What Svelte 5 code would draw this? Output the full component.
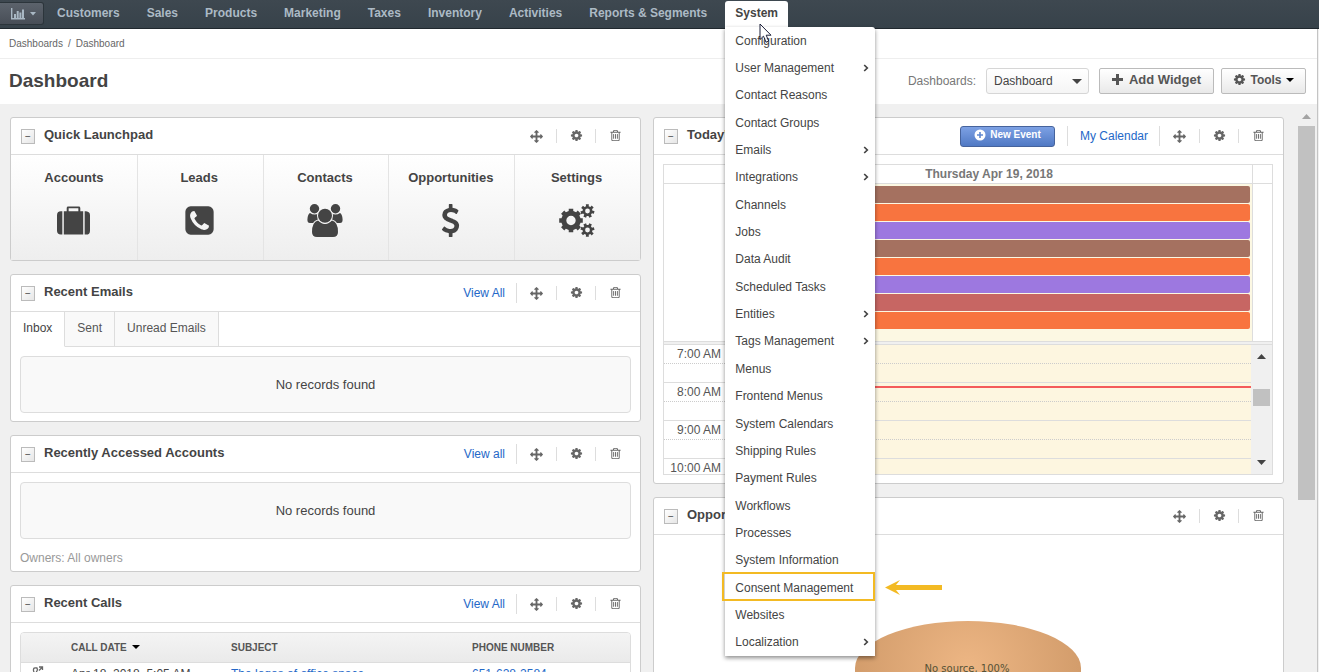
<script>
  const navItems = ['Customers', 'Sales', 'Products', 'Marketing', 'Taxes', 'Inventory', 'Activities', 'Reports & Segments'];

  const menuItems = [
    { label: 'Configuration' },
    { label: 'User Management', sub: true },
    { label: 'Contact Reasons' },
    { label: 'Contact Groups' },
    { label: 'Emails', sub: true },
    { label: 'Integrations', sub: true },
    { label: 'Channels' },
    { label: 'Jobs' },
    { label: 'Data Audit' },
    { label: 'Scheduled Tasks' },
    { label: 'Entities', sub: true },
    { label: 'Tags Management', sub: true },
    { label: 'Menus' },
    { label: 'Frontend Menus' },
    { label: 'System Calendars' },
    { label: 'Shipping Rules' },
    { label: 'Payment Rules' },
    { label: 'Workflows' },
    { label: 'Processes' },
    { label: 'System Information' },
    { label: 'Consent Management', marked: true },
    { label: 'Websites' },
    { label: 'Localization', sub: true }
  ];

  const launchers = ['Accounts', 'Leads', 'Contacts', 'Opportunities', 'Settings'];
  const eventColors = ['#a57160', '#f8743f', '#9d78e0', '#a57160', '#f8743f', '#9d78e0', '#c76663', '#f8743f'];
  const hours = ['7:00 AM', '8:00 AM', '9:00 AM', '10:00 AM'];

  const icons = {
    move: 'M1792 896q0 26-19 45l-256 256q-19 19-45 19t-45-19-19-45v-128h-384v384h128q26 0 45 19t19 45-19 45l-256 256q-19 19-45 19t-45-19l-256-256q-19-19-19-45t19-45 45-19h128v-384h-384v128q0 26-19 45t-45 19-45-19l-256-256q-19-19-19-45t19-45l256-256q19-19 45-19t45 19 19 45v128h384v-384h-128q-26 0-45-19t-19-45 19-45l256-256q19-19 45-19t45 19l256 256q19 19 19 45t-19 45-45 19h-128v384h384v-128q0-26 19-45t45-19 45 19l256 256q19 19 19 45z',
    cog: 'M1152 896q0-106-75-181t-181-75-181 75-75 181 75 181 181 75 181-75 75-181zm512-109v222q0 12-8 23t-20 13l-185 28q-19 54-39 91 35 50 107 138 10 12 10 25t-9 23q-27 37-99 108t-94 71q-12 0-26-9l-138-108q-44 23-91 38-16 136-29 186-7 28-36 28h-222q-14 0-24.5-8.5t-11.5-21.5l-28-184q-49-16-90-37l-141 107q-10 9-25 9-14 0-25-11-126-114-165-168-7-10-7-23 0-12 8-23 15-21 51-66.5t54-70.5q-27-50-41-99l-183-27q-13-2-21-12.5t-8-23.5v-222q0-12 8-23t19-13l186-28q14-46 39-92-40-57-107-138-10-12-10-24 0-10 9-23 26-36 98.5-107.5t94.5-71.5q13 0 26 10l138 107q44-23 91-38 16-136 29-186 7-28 36-28h222q14 0 24.5 8.5t11.5 21.5l28 184q49 16 90 37l142-107q9-9 24-9 13 0 25 10 129 119 165 170 7 8 7 22 0 12-8 23-15 21-51 66.5t-54 70.5q26 50 41 98l183 28q13 2 21 12.5t8 23.5z',
    trash: 'M704 736v576q0 14-9 23t-23 9h-64q-14 0-23-9t-9-23v-576q0-14 9-23t23-9h64q14 0 23 9t9 23zm256 0v576q0 14-9 23t-23 9h-64q-14 0-23-9t-9-23v-576q0-14 9-23t23-9h64q14 0 23 9t9 23zm256 0v576q0 14-9 23t-23 9h-64q-14 0-23-9t-9-23v-576q0-14 9-23t23-9h64q14 0 23 9t9 23zm128 724v-948h-896v948q0 22 7 40.5t14.5 27 10.5 8.5h832q3 0 10.5-8.5t14.5-27 7-40.5zm-672-1076h448l-48-117q-7-9-17-11h-317q-10 2-17 11zm928 32v64q0 14-9 23t-23 9h-96v948q0 83-47 143.5t-113 60.5h-832q-66 0-113-58.5t-47-141.5v-952h-96q-14 0-23-9t-9-23v-64q0-14 9-23t23-9h309l70-167q15-37 54-63t79-26h320q40 0 79 26t54 63l70 167h309q14 0 23 9t9 23z',
    Leads: 'M1408 1193q0-11-2-16t-18-16.5-40.5-25-47.5-26.5-45.5-25-28.5-15q-5-3-19-13t-25-15-21-5q-15 0-36.5 20.5t-39.5 45-38.5 45-33.5 20.5q-7 0-16.5-3.5t-15.5-6.5-17-9.5-14-8.5q-99-55-170-126.500t-127-170.5q-2-3-8.5-14t-9.5-17-6.5-15.5-3.500-16.5q0-13 20.500-33.500t45-38.500 45-39.500 20.500-36.500q0-10-5-21t-15-25-13-19q-3-6-15-28.500t-25-45.500-26.500-47.500-25-40.500-16.500-18-16-2q-48 0-101 22-46 21-80 94.500t-34 130.500q0 16 2.500 34t5 30.500 9 33 10 29.500 12.500 33 11 30q60 164 216.500 320.500t320.500 216.500q6 2 30 11t33 12.500 29.500 10 33 9 30.500 5 34 2.500q57 0 130.500-34t94.500-80q22-53 22-101zm256-777v960q0 119-84.500 203.500t-203.500 84.500h-960q-119 0-203.500-84.500t-84.500-203.500v-960q0-119 84.500-203.500t203.500-84.500h960q119 0 203.500 84.500t84.500 203.500z',
    Opportunities: 'M1362 1185q0 153-99.5 263.5t-258.5 136.5v175q0 14-9 23t-23 9h-135q-13 0-22.5-9.5t-9.5-22.5v-175q-66-9-127.5-31t-101.500-44.500-74-48-46.500-37.500-17.500-18q-17-21-2-41l103-135q7-10 23-12 15-2 24 9l2 2q113 99 243 125 37 8 74 8 81 0 142.500-43t61.500-122q0-28-15-53t-33.500-42-58.500-37.500-66-32-80-32.500q-39-16-61.500-25t-61.500-26.500-62.500-31-56.500-35.500-53.500-42.500-43.500-49-35.500-58-21-66.500-8.500-78q0-138 98-242t255-134v-180q0-13 9.500-22.500t22.500-9.500h135q14 0 23 9t9 23v176q57 6 110.500 23t87 33.500 63.500 37.500 39 29 15 14q17 18 5 38l-81 146q-8 15-23 16-14 3-27-7-3-3-14.500-12t-39-26.500-58.500-32-74.500-26-85.500-11.500q-95 0-155 43t-60 111q0 26 8.500 48t29.500 41.500 39.500 33 56 31 60.500 27 70 27.500q53 20 81 31.500t76 35 75.500 42.500 62 50 53 63.500 31.500 76.500 13 94z'
  };

  // Outline of a cog wheel with square teeth and a round hole.
  function gear(cx, cy, outer, inner, hole, teeth, turn = 0) {
    const step = (Math.PI * 2) / teeth;
    const points = [];
    for (let i = 0; i < teeth; i++) {
      const a = i * step + turn;
      for (const [offset, r] of [[-0.3, inner], [-0.24, outer], [0.24, outer], [0.3, inner]]) {
        const t = a + offset * step;
        points.push(`${(cx + Math.cos(t) * r).toFixed(2)} ${(cy + Math.sin(t) * r).toFixed(2)}`);
      }
    }
    return `M${points.join('L')}ZM${cx - hole} ${cy}a${hole} ${hole} 0 1 0 ${hole * 2} 0a${hole} ${hole} 0 1 0 ${-hole * 2} 0Z`;
  }
</script>

{#snippet glyph(name, cls)}
  <svg class={cls} viewBox="0 0 1792 1792" aria-hidden="true"><path d={icons[name]} /></svg>
{/snippet}

{#snippet widgetHead(title, link, newEvent)}
  <header class="widget-head">
    <button class="collapse" aria-label="Collapse {title}">−</button>
    <h2>{title}</h2>
    <div class="actions">
      {#if newEvent}
        <button class="new-event">
          <svg viewBox="0 0 12 12" aria-hidden="true"><circle cx="6" cy="6" r="5.500" fill="#fff" /><path d="M6 3v6M3 6h6" stroke="#6088cf" stroke-width="1.600" /></svg>
          New Event
        </button>
        <span class="bar"></span>
      {/if}
      {#if link}
        <a class="link" href="#all">{link}</a>
        <span class="bar"></span>
      {/if}
      <button class="tool" aria-label="Move">{@render glyph('move', 'small-icon')}</button>
      <button class="tool split" aria-label="Configure">{@render glyph('cog', 'small-icon')}</button>
      <button class="tool split" aria-label="Delete">{@render glyph('trash', 'small-icon')}</button>
    </div>
  </header>
{/snippet}

<div class="app">
  <nav class="topbar">
    <button class="dash-button" aria-label="Dashboards menu">
      <svg width="15" height="12" viewBox="0 0 15 12" aria-hidden="true"><path d="M.7 0v10.700H14" fill="none" stroke="#a9b8c4" stroke-width="1.400" /><path d="M3 6h2v4H3zM5.700 3h2v7h-2zM8.400 4.500h2V10h-2zM11 1.500h2V10h-2z" fill="#a9b8c4" /></svg>
      <svg width="6" height="4" viewBox="0 0 6 4" aria-hidden="true"><path d="M0 0h6L3 3.500z" fill="#a9b8c4" /></svg>
    </button>
    <ul class="nav-list">
      {#each navItems as item}
        <li><a href="#nav">{item}</a></li>
      {/each}
      <li class="open">
        <a href="#system">System</a>
        <ul class="menu">
          {#each menuItems as item}
            <li class:marked={item.marked}>
              <a href="#item">{item.label}</a>
              {#if item.sub}
                <svg width="6" height="8" viewBox="0 0 6 8" aria-hidden="true"><path d="M1.200 1L4.300 4 1.200 7" fill="none" stroke="#444" stroke-width="1.700" /></svg>
              {/if}
              {#if item.marked}
                <svg class="arrow" width="57" height="15" viewBox="0 0 57 15" aria-hidden="true"><path d="M0 7.500L15 0l-4 5h46v5H11l4 5z" fill="#f3ba23" /></svg>
              {/if}
            </li>
          {/each}
        </ul>
        <svg class="pointer" width="13" height="21" viewBox="0 0 13 21" aria-hidden="true"><path d="M1 1v15.500l3.500-3.300 2.500 6 2.700-1.100L7.200 12.200H12z" fill="#fff" fill-opacity=".8" stroke="#1b1f38" /></svg>
      </li>
    </ul>
  </nav>

  <div class="page">
    <div class="crumbs"><a href="#dashboards">Dashboards</a><span>/</span><a href="#dashboard">Dashboard</a></div>
    <div class="title-row">
      <h1>Dashboard</h1>
      <div class="controls">
        <label for="board">Dashboards:</label>
        <span class="select-wrap">
          <select id="board"><option>Dashboard</option></select>
          <svg width="10" height="5" viewBox="0 0 10 5" aria-hidden="true"><path d="M0 0h10L5 5z" fill="#444" /></svg>
        </span>
        <button class="btn add">
          <svg width="11" height="11" viewBox="0 0 11 11" aria-hidden="true"><path d="M5.500 0v11M0 5.500h11" stroke="#555" stroke-width="3" /></svg>
          Add Widget
        </button>
        <button class="btn tools">
          {@render glyph('cog', 'small-icon')}
          Tools
          <svg width="8" height="4" viewBox="0 0 8 4" aria-hidden="true"><path d="M0 0h8L4 4z" fill="#000" /></svg>
        </button>
      </div>
    </div>

    <main>
      <div class="columns">
        <div class="column">
          <section class="widget">
            {@render widgetHead('Quick Launchpad')}
            <div class="launchpad">
              {#each launchers as name}
                <a href="#open">
                  <span>{name}</span>
                  {#if name === 'Accounts'}
                    <svg class="big-icon" viewBox="0 0 34 33" aria-hidden="true"><path fill-rule="evenodd" d="M10 7V3.500Q10 2 11.500 2h11Q24 2 24 3.500V7h3v24H7V7zM12 4v3h10V4zM5.500 7v24H4q-4-.5-4-4V11q0-4 4-4zM28.500 7H30q4 .5 4 4v16q0 4-4 4h-1.500z" /></svg>
                  {:else if name === 'Contacts'}
                    <svg class="big-icon wide" viewBox="0 0 36 33" aria-hidden="true">
                      <circle cx="7.500" cy="4.700" r="4.700" /><circle cx="28.500" cy="4.700" r="4.700" />
                      <path d="M3 9Q7.500 12 12 9L14 19H3Q.3 19 .4 15.500 .7 10 3 9zM33 9Q28.500 12 24 9L22 19h11q2.700 0 2.600-3.500Q35.300 10 33 9z" />
                      <path class="cut" d="M11 16.500Q15 20 18 20t7-3.500q6 1.500 6 11.500 0 5-5 5h-16q-5 0-5-5 0-10 6-11.500z" />
                      <circle class="cut" cx="18" cy="11.700" r="7" />
                    </svg>
                  {:else if name === 'Settings'}
                    <svg class="big-icon wide" viewBox="0 0 36 33" aria-hidden="true"><path fill-rule="evenodd" d={gear(12, 16.500, 12, 9.800, 4.700, 8) + gear(28.500, 7, 7, 5, 2.400, 7, 0.200) + gear(28.500, 26, 7, 5, 2.400, 7, -0.200)} /></svg>
                  {:else}
                    {@render glyph(name, 'big-icon')}
                  {/if}
                </a>
              {/each}
            </div>
          </section>

          <section class="widget">
            {@render widgetHead('Recent Emails', 'View All')}
            <div class="tabs">
              <button class="active">Inbox</button>
              <button>Sent</button>
              <button>Unread Emails</button>
            </div>
            <div class="body"><p class="empty">No records found</p></div>
          </section>

          <section class="widget">
            {@render widgetHead('Recently Accessed Accounts', 'View all')}
            <div class="body"><p class="empty">No records found</p></div>
            <p class="owners">Owners: All owners</p>
          </section>

          <section class="widget">
            {@render widgetHead('Recent Calls', 'View All')}
            <div class="body">
              <div class="table-frame">
                <table>
                  <thead>
                    <tr>
                      <th class="c-icon"></th>
                      <th class="c-date">CALL DATE <svg width="8" height="4" viewBox="0 0 8 4" aria-hidden="true"><path d="M0 0h8L4 4z" fill="#000" /></svg></th>
                      <th class="c-subject">SUBJECT</th>
                      <th>PHONE NUMBER</th>
                    </tr>
                  </thead>
                  <tbody>
                    <tr>
                      <td class="c-icon"><svg width="12" height="12" viewBox="0 0 12 12" aria-hidden="true"><path d="M5 2Q1 1 1.500 4.500T8 11l2-2-2-2-1.500 1Q5 7 4.500 5.500L5.500 4zM7 1h3.500v3M10 1.500L7 4.500" fill="none" stroke="#666" stroke-width="1.300" /></svg></td>
                      <td>Apr 18, 2018, 5:05 AM</td>
                      <td><a href="#call">The logos of office space</a></td>
                      <td><a href="#phone">651-628-2584</a></td>
                    </tr>
                  </tbody>
                </table>
              </div>
            </div>
          </section>
        </div>

        <div class="column">
          <section class="widget">
            {@render widgetHead("Today's Calendar", 'My Calendar', true)}
            <div class="body">
              <div class="calendar">
                <div class="cal-row cal-head"><div></div><div>Thursday Apr 19, 2018</div><div></div></div>
                <div class="cal-row all-day">
                  <div></div>
                  <div class="events">
                    {#each eventColors as color}
                      <i style="background: {color}"></i>
                    {/each}
                  </div>
                  <div></div>
                </div>
                <div class="divider"></div>
                <div class="slots">
                  <div class="slot-rows">
                    {#each hours as hour}
                      <div class="hour"><span>{hour}</span><div></div></div>
                    {/each}
                    <div class="now"></div>
                  </div>
                  <div class="cal-scroll">
                    <svg width="9" height="5" viewBox="0 0 9 5" aria-hidden="true"><path d="M0 5h9L4.500 0z" /></svg>
                    <i></i>
                    <svg class="down" width="9" height="5" viewBox="0 0 9 5" aria-hidden="true"><path d="M0 0h9L4.500 5z" /></svg>
                  </div>
                </div>
              </div>
            </div>
          </section>

          <section class="widget">
            {@render widgetHead('Opportunities By Lead Source')}
            <div class="chart">
              <svg width="226" height="120" viewBox="0 0 226 120" role="img" aria-label="Opportunities by source">
                <defs>
                  <radialGradient id="pie" cx="113" cy="48" r="125" gradientUnits="userSpaceOnUse">
                    <stop offset="0" stop-color="#edb684" />
                    <stop offset="1" stop-color="#d09a69" />
                  </radialGradient>
                </defs>
                <path d="M0 48a113 47 0 0 1 226 0v30a113 47 0 0 1-226 0z" fill="url(#pie)" />
                <text x="112" y="52" text-anchor="middle">No source, 100%</text>
              </svg>
            </div>
          </section>
        </div>
      </div>

      <div class="page-scroll">
        <svg width="9" height="5" viewBox="0 0 9 5" aria-hidden="true"><path d="M0 5h9L4.500 0z" fill="#a3a3a3" /></svg>
        <i></i>
      </div>
    </main>
  </div>
</div>

<style>
  :global(body) {
    margin: 0;
    overflow: hidden;
  }

  .app, .app :global(*) { box-sizing: border-box; }

  .app {
    display: flex;
    flex-direction: column;
    height: 100vh;
    background: #f0f0f0;
    color: #444;
    font: 12px/20px "Liberation Sans", Arial, sans-serif;
  }

  a { color: inherit; text-decoration: none; }
  h1, h2, p, ul { margin: 0; padding: 0; }
  ul { list-style: none; }
  button, select { font: inherit; color: inherit; }

  .topbar {
    display: flex;
    height: 29px;
    flex: none;
    background: linear-gradient(#3e4850, #37424a);
    border-bottom: 1px solid #20282e;
  }
  .dash-button {
    display: flex;
    align-items: center;
    gap: 4px;
    width: 44px;
    height: 23px;
    margin: 2px 3px 0 0;
    padding: 0 0 0 11px;
    border: 1px solid #2c353b;
    border-left: 0;
    border-radius: 0 3px 3px 0;
    background: linear-gradient(#5c636c, #484e57);
  }
  .nav-list { display: flex; gap: 7px; padding-top: 1px; }
  .nav-list > li { position: relative; height: 26px; }
  .nav-list > li > a {
    display: block;
    padding: 0 10px;
    font-weight: bold;
    line-height: 24px;
    color: #acbac5;
    white-space: nowrap;
  }
  .nav-list > .open { margin-left: 1px; background: #fff; border-radius: 3px 3px 0 0; }
  .nav-list > .open > a { color: #444; }

  .menu {
    position: absolute;
    z-index: 5;
    top: 26px;
    left: 0;
    display: grid;
    grid-auto-rows: 1fr;
    width: 150px;
    min-height: 629px;
    background: #fff;
    border-radius: 0 3px 0 0;
    box-shadow: 0 2px 4px rgba(0, 0, 0, .45);
  }
  .menu li {
    position: relative;
    display: flex;
    align-items: center;
    justify-content: space-between;
    padding: 0 6px 0 10px;
  }
  .menu a { white-space: nowrap; }
  .menu .marked::before {
    content: "";
    position: absolute;
    inset: -2px 0 0 -3px;
    border: 2px solid #f3ba23;
  }
  .arrow { position: absolute; left: 160px; top: 6px; }
  .pointer { position: absolute; z-index: 6; left: 34px; top: 22px; }

  .page {
    display: flex;
    flex-direction: column;
    flex: 1;
    min-height: 0;
    margin-right: 1px;
    border-right: 1px solid #c4c4c4;
  }
  .crumbs {
    display: flex;
    gap: 5px;
    height: 30px;
    padding: 0 9px;
    border-bottom: 1px solid #eee;
    background: #fff;
    font-size: 10px;
    line-height: 29px;
    color: #666;
  }
  .title-row {
    display: flex;
    align-items: center;
    justify-content: space-between;
    height: 45px;
    padding: 0 11px 2px 9px;
    background: #fff;
  }
  h1 { font-size: 19px; line-height: 24px; }
  .controls { display: flex; align-items: center; }
  .controls label { margin-right: 10px; color: #777; }
  .select-wrap {
    position: relative;
    width: 103px;
    margin-right: 10px;
  }
  .select-wrap svg { position: absolute; right: 7px; top: 11px; pointer-events: none; }
  select {
    display: block;
    width: 100%;
    height: 26px;
    padding: 0 7px;
    appearance: none;
    border: 1px solid #d6d6d6;
    border-radius: 3px;
    background: linear-gradient(#fff, #f5f5f5);
  }
  .btn {
    display: flex;
    align-items: center;
    justify-content: center;
    height: 26px;
    padding: 0 10px 2px;
    border: 1px solid #bbb;
    border-radius: 2px;
    background: linear-gradient(#fff, #e9e9e9);
    font-weight: bold;
    color: #555;
    fill: #555;
  }
  .add { gap: 6px; width: 115px; margin-right: 7px; font-size: 13px; }
  .tools { gap: 4px; width: 85px; }

  main { display: flex; flex: 1; min-height: 0; overflow: hidden; }
  .columns {
    display: grid;
    grid-template-columns: 1fr 1fr;
    gap: 12px;
    flex: 1;
    padding: 13px 14px 0 10px;
  }
  .column { display: flex; flex-direction: column; gap: 13px; min-width: 0; }
  .widget {
    border: 1px solid #ccc;
    border-radius: 3px;
    background: #fff;
  }
  .widget-head {
    display: flex;
    height: 37px;
    padding: 0 6px 0 10px;
    border-bottom: 1px solid #ddd;
  }
  .collapse {
    width: 14px;
    height: 15px;
    margin: 11px 9px 0 0;
    padding: 0;
    border: 1px solid #bbb;
    background: linear-gradient(135deg, #fff, #e6e6e6);
    font-size: 10px;
    line-height: 11px;
  }
  h2 { flex: 1; font-size: 13px; line-height: 34px; white-space: nowrap; }
  .actions { display: flex; align-items: center; }
  .tool {
    display: flex;
    justify-content: center;
    width: 39px;
    padding: 0;
    border: 0;
    background: none;
    fill: #666;
  }
  .split { height: 14px; border-left: 1px solid #ddd; }
  .small-icon { width: 13px; height: 13px; }
  .bar { width: 1px; height: 20px; background: #ddd; }
  .link { margin: 0 11px 0 12px; color: #2468c8; }
  .new-event {
    display: flex;
    align-items: center;
    justify-content: center;
    gap: 4px;
    width: 95px;
    height: 21px;
    margin-right: 12px;
    padding: 0 0 2px;
    border: 1px solid #46639c;
    border-radius: 3px;
    background: linear-gradient(#7da1e4, #5079c4);
    color: #fff;
    font-size: 10px;
    font-weight: bold;
  }
  .new-event svg { width: 12px; height: 12px; }
  .body { padding: 9px 9px 8px; }
  .empty {
    border: 1px solid #ddd;
    border-radius: 4px;
    background: #f9f9f9;
    font-size: 13px;
    line-height: 55px;
    text-align: center;
  }
  .owners { padding: 1px 9px 3px; color: #999; }

  .launchpad { display: grid; grid-template-columns: repeat(5, 1fr); background: linear-gradient(#fff, #eee); }
  .launchpad a {
    display: flex;
    flex-direction: column;
    align-items: center;
    gap: 16px;
    padding: 13px 0 23px;
    font-size: 13px;
    font-weight: bold;
  }
  .launchpad a + a { border-left: 1px solid #e4e4e4; }
  .launchpad a + a { padding-right: 2px; }
  .big-icon { width: 33px; height: 33px; fill: #444; }
  .wide { width: 36px; }
  .cut { stroke: #f6f6f6; stroke-width: 2px; paint-order: stroke; }

  .tabs { display: flex; height: 35px; box-shadow: inset 0 -1px #ddd; }
  .tabs button {
    padding: 0 12px 2px;
    border: 0;
    border-right: 1px solid #ddd;
    border-bottom: 1px solid #ddd;
    background: #f9f9f9;
    color: #555;
  }
  .tabs .active { background: #fff; border-bottom-color: #fff; color: #444; }

  .table-frame { border: 1px solid #ddd; border-radius: 4px; overflow: hidden; }
  table { width: 100%; table-layout: fixed; border-collapse: collapse; }
  th {
    height: 29px;
    padding: 2px 0 0;
    border-bottom: 1px solid #ddd;
    background: linear-gradient(#f4f4f4, #eaeaea);
    color: #555;
    font-size: 10px;
    line-height: 16px;
    text-align: left;
  }
  th svg { margin: 0 0 2px 2px; }
  td { padding: 1px 0 8px; }
  td a { color: #2468c8; }
  .c-icon { width: 50px; padding-left: 11px; }
  .c-date { width: 160px; }
  .c-subject { width: 241px; }

  .calendar { margin-right: 1px; border: 1px solid #ddd; }
  .cal-row { display: grid; grid-template-columns: 61px 1fr 20px; }
  .cal-row > div + div { border-left: 1px solid #ddd; }
  .cal-head {
    height: 19px;
    border-bottom: 1px solid #ddd;
    line-height: 18px;
    font-weight: bold;
    color: #777;
    text-align: center;
  }
  .all-day { height: 157px; }
  .events {
    display: flex;
    flex-direction: column;
    gap: 1px;
    padding: 2px 2px 0;
    background: #fcf8e3;
  }
  .events i { height: 17px; border-radius: 2px; }
  .divider { height: 4px; border: solid #ddd; border-width: 1px 0; background: #f0f0f0; }
  .slots { display: flex; height: 129px; }
  .slot-rows { position: relative; flex: 1; overflow: hidden; }
  .hour {
    display: grid;
    grid-template-columns: 61px 1fr;
    height: 38px;
    border-bottom: 1px solid #ddd;
  }
  .hour span {
    padding-right: 4px;
    line-height: 18px;
    text-align: right;
    color: #555;
  }
  .hour div { border-left: 1px solid #ddd; background: #fdf6e0; }
  .hour span::after, .hour div::after {
    content: "";
    display: block;
    height: 0;
    border-top: 1px dotted #ccc;
  }
  .hour span::after { margin-right: -4px; }
  .hour div::after { margin-top: 18px; }
  .now { position: absolute; top: 41px; left: 61px; right: 0; height: 2px; background: #f45b5b; }
  .cal-scroll {
    display: flex;
    flex-direction: column;
    align-items: center;
    width: 21px;
    padding: 9px 0;
    background: #f0f0f0;
    fill: #444;
  }
  .cal-scroll i { width: 17px; height: 17px; margin-top: 30px; background: #c1c1c1; }
  .down { margin-top: auto; }

  .chart { display: flex; justify-content: center; padding: 85px 2px 0 0; }
  text { font: 10px "DejaVu Sans", Verdana, sans-serif; fill: #555236; }

  .page-scroll {
    display: flex;
    flex-direction: column;
    align-items: center;
    width: 19px;
    padding: 10px 2px 0 0;
  }
  .page-scroll i { width: 17px; height: 67%; margin-top: 7px; background: #c1c1c1; }
</style>
